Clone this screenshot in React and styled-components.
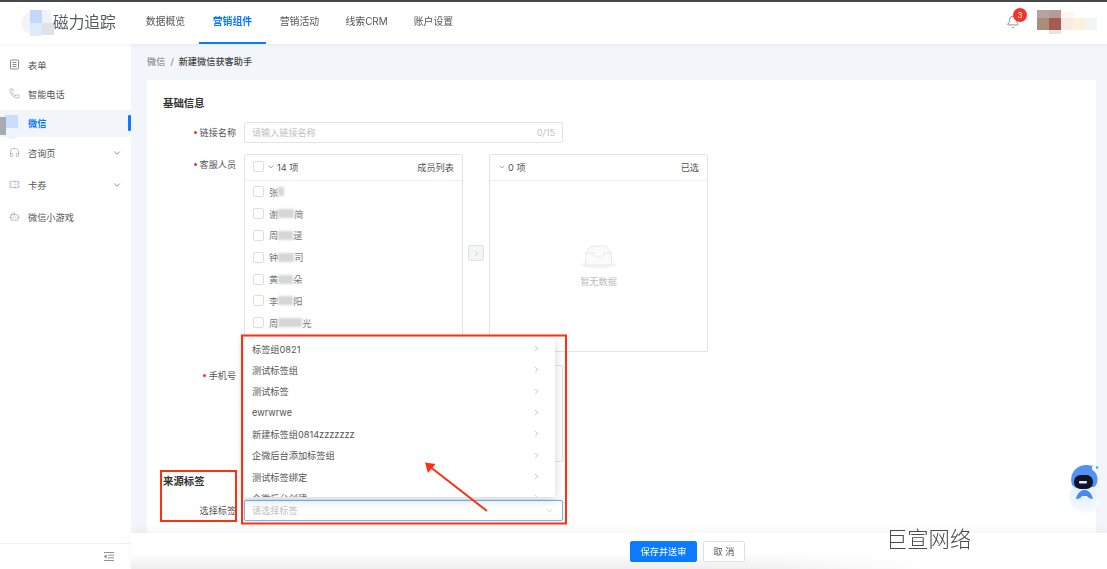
import React from 'react';
import styled, { createGlobalStyle } from 'styled-components';
import { Bell, Bot, ChevronDown, ChevronRight, Headphones, Phone, Ticket } from 'lucide-react';

const Global = createGlobalStyle`
  html, body { margin: 0; padding: 0; background: #fff; }
  * { box-sizing: border-box; }
  body { font-family: Inter, "Noto Sans CJK SC", "Noto Sans", sans-serif; color: #555; font-size: 9.2px; }
`;

const Page = styled.div`position: relative; width: 1107px; height: 569px; overflow: hidden;`;
const Shell = styled.div`position: relative; width: 100%; height: 100%; display: flex; flex-direction: column; filter: blur(0.42px);`;
const TopStrip = styled.div`height: 2px; background: #45484d; flex: none;`;
const Header = styled.header`
  height: 42px; flex: none; display: flex; align-items: stretch; background: #fff; position: relative; z-index: 2;
  box-shadow: 0 1px 4px rgba(0,0,0,.05);
`;
const Brand = styled.div`width: 132px; flex: none; display: flex; align-items: center; padding-left: 21px; position: relative;`;
const BrandName = styled.span`font-size: 15.7px; color: #565b62; position: absolute; left: 53px; top: 10px; line-height: 22px;`;
const Nav = styled.nav`display: flex; flex: 1;`;
const NavItem = styled.a`
  width: 67px; display: flex; align-items: center; justify-content: center; font-size: 9.9px; white-space: nowrap;
  color: ${p => (p.$active ? '#0a7aff' : '#555')}; font-weight: ${p => (p.$active ? 700 : 400)};
  border-bottom: 2px solid ${p => (p.$active ? '#0a7aff' : 'transparent')};
  padding-bottom: 3px;
`;
const HeaderRight = styled.div`width: 110px; margin-right: 9px; margin-left: -1px; display: flex; align-items: center; justify-content: space-between; padding-left: 18px;`;
const BellWrap = styled.div`position: relative; width: 14px; height: 14px; margin-top: -2px; color: #666; display: flex;`;
const Badge = styled.span`
  position: absolute; left: 7px; top: -7px; width: 14px; height: 14px; border-radius: 50%;
  background: #f5332a; color: #fff; font-size: 8px; line-height: 14px; text-align: center;
`;
const Avatar = styled.svg`display: block; width: 62px; height: 26px; margin-top: -2px;`;

const Body = styled.div`flex: 1; display: flex; min-height: 0;`;
const Sidebar = styled.aside`width: 131px; flex: none; background: #fff; display: flex; flex-direction: column; padding-top: 8px; position: relative;`;
const SideList = styled.div`flex: 1; display: flex; flex-direction: column; gap: 2px;`;
const SideItem = styled.div`
  position: relative; height: ${p => (p.$tall ? 30 : 27)}px; display: flex; align-items: center; gap: 8px; padding: 0 10px ${p => (p.$tall ? 3 : 2)}px 9px;
  flex: none; font-size: 9.2px;
  color: ${p => (p.$active ? '#0a7aff' : '#555')}; font-weight: ${p => (p.$active ? 700 : 400)};
  background: ${p => (p.$active ? '#f2f6fb' : 'transparent')};
  ${p => p.$active && `&::after { content: ""; position: absolute; right: 0; top: 5px; width: 3px; height: 16px; background: #0a7aff; border-radius: 1px; }`}
  svg { color: #808080; flex: none; }
`;
const SideLabel = styled.span`flex: 1;`;
const Caret = styled(ChevronDown)`&& { color: #555; margin-right: -1px; }`;
const SideMosaic = styled.svg`position: absolute; left: 0; top: 5px; width: 24px; height: 24px;`;
const SideFoot = styled.div`height: 26px; flex: none; border-top: 1px solid #f0f0f0; display: flex; align-items: center; justify-content: flex-end; padding: 0 17px 0 0;`;

const Main = styled.main`flex: 1; min-width: 0; display: flex; flex-direction: column; background: #f2f5f9;`;
const Content = styled.div`flex: 1; min-height: 0; overflow: hidden; padding: 0 11px 0 16px;`;
const Crumbs = styled.div`height: 36px; padding-bottom: 2px; display: flex; align-items: center; gap: 5px; color: #777; font-size: 9.2px;`;
const CrumbNow = styled.span`color: #444; font-weight: 500;`;
const Card = styled.section`background: #fff; padding: 16px 16px 40px; min-height: 500px;`;
const Title = styled.h3`margin: 0 0 12px; padding-top: 1px; height: 14px; font-size: 10.4px; line-height: 14px; font-weight: 700; color: #333;`;
const Row = styled.div`display: grid; grid-template-columns: 73px 1fr; column-gap: 8px; margin-bottom: ${p => p.$mb ?? 11}px;`;
const Label = styled.label`
  display: flex; justify-content: flex-end; align-items: center; gap: 3px; height: 21px; padding-bottom: 1px; color: #555; font-size: 9.1px; white-space: nowrap;
  ${p => p.$req && `&::before { content: ""; width: 3px; height: 3px; border-radius: 50%; background: #f5332a; }`}
`;
const Field = styled.div`
  position: relative; width: 319px; height: 21px; border: 1px solid ${p => (p.$focus ? '#78b4f8' : '#e3e3e3')}; border-radius: 2px;
  display: flex; align-items: center; justify-content: space-between; padding: 0 7px 1px; background: #fff; color: #c0c0c0; font-size: 9.1px;
  ${p => p.$focus && 'box-shadow: 0 0 0 1px rgba(10,122,255,.12);'}
`;
const Count = styled.span`color: #c4c4c4;`;
const TextBox = styled.div`width: 319px; height: 97px; border: 1px solid #e3e3e3; border-radius: 2px; background: #fff;`;
const Transfer = styled.div`display: flex; align-items: center; width: 464px;`;
const Panel = styled.div`width: 219px; height: 198px; border: 1px solid #e3e3e3; border-radius: 2px; display: flex; flex-direction: column; overflow: hidden; flex: none;`;
const PanelHead = styled.div`
  height: 26px; flex: none; display: flex; align-items: center; padding: 0 8px 2px; gap: 2px; border-bottom: 1px solid #f0f0f0; color: #555;
  svg { color: #444; flex: none; }
`;
const HeadTitle = styled.span`margin-left: auto;`;
const Check = styled.span`width: 11px; height: 11px; flex: none; border: 1px solid #dedede; border-radius: 2px; background: #fff; margin-right: ${p => p.$mr ?? 5}px;`;
const PersonRow = styled.div`height: 21.8px; flex: none; display: flex; align-items: center; padding-left: 8px; color: #777;`;
const Name = styled.span`display: inline-flex; align-items: center; white-space: nowrap;`;
const Smudge = styled.i`display: inline-block; height: 9px; background: #d6d6d6; filter: blur(1px); width: ${p => p.$w}px;`;
const Mover = styled.button`
  width: 16px; height: 16px; margin: 0 5px; padding: 0; flex: none; border: 1px solid #e0e0e0; border-radius: 2px; background: #f3f5f8; color: #aaa;
  display: flex; align-items: center; justify-content: center;
`;
const Empty = styled.div`flex: 1; display: flex; flex-direction: column; align-items: center; padding-top: 64px; color: #bdbdbd; gap: 5px;`;
const SelectArea = styled.div`position: relative; width: 319px;`;
const Dropdown = styled.div`
  position: absolute; left: 0; bottom: calc(100% + 3px); width: 311px; height: 160px; overflow: hidden; background: #fff; padding-top: 1px; z-index: 3;
  box-shadow: 0 3px 10px rgba(0,0,0,.16);
`;
const Option = styled.div`
  height: 21.33px; display: flex; align-items: center; justify-content: space-between; padding: 0 14px 0 8px; color: #555; font-size: 9.2px;
  svg { color: #888; }
`;
const Next = styled.div`margin: 11px 0 0; font-size: 10.4px; font-weight: 400; color: #777; line-height: 14px;`;
const Footer = styled.footer`
  height: 36px; flex: none; display: flex; align-items: center; padding-left: 499px; position: relative;
  background: linear-gradient(to right, rgba(255,255,255,0) 62%, #fff 82%), linear-gradient(#fff 55%, #eeeeee);
  box-shadow: 0 -3px 8px rgba(0,0,0,.04);
`;
const Btn = styled.button`
  height: 21px; width: ${p => p.$w}px; border-radius: 2px; font: inherit; font-size: 9.2px; padding: 0;
  border: 1px solid ${p => (p.$primary ? '#0a7aff' : '#e0e0e0')};
  background: ${p => (p.$primary ? '#0a7aff' : '#fff')}; color: ${p => (p.$primary ? '#fff' : '#555')};
`;
const FooterBtns = styled.div`display: flex; gap: 6px;`;

const Annotations = styled.svg`position: absolute; inset: 0; width: 1107px; height: 569px; pointer-events: none; z-index: 5;`;
const Robot = styled.svg`position: absolute; left: 1066px; top: 463px; width: 38px; height: 52px; z-index: 4;`;
const Watermark = styled.div`position: absolute; left: 886px; top: 522px; font-family: "Noto Sans CJK SC", sans-serif; font-size: 21.3px; line-height: 31px; color: #4a4a4a; font-weight: 300; z-index: 6;`;

const people = [
  ['张', 6, ''], ['谢', 16, '简'], ['周', 15, '逯'], ['钟', 16, '司'],
  ['黄', 15, '朵'], ['李', 15, '阳'], ['周', 24, '光'],
];
const options = ['标签组0821', '测试标签组', '测试标签', 'ewrwrwe', '新建标签组0814zzzzzzz', '企微后台添加标签组', '测试标签绑定', '企微后台创建'];
const navs = ['数据概览', '营销组件', '营销活动', '线索CRM', '账户设置'];

const FormIcon = () => (
  <svg width="11" height="11" viewBox="0 0 11 11" fill="none" stroke="currentColor" strokeWidth="0.9">
    <rect x="1.500" y="1" width="8" height="9" rx="0.8" />
    <path d="M3.500 3.500h4M3.500 5.500h4M3.500 7.500h4" />
  </svg>
);

export default function App() {
  return (
    <Page>
      <Global />
      <Shell>
        <TopStrip />
        <Header>
          <Brand>
            <svg width="34" height="28" viewBox="0 0 34 28" style={{ marginTop: 1 }}>
              <ellipse cx="16" cy="13" rx="16" ry="12" fill="#f1f4f9" />
              <rect x="9" y="0" width="12" height="13" fill="#c5d6fb" />
              <rect x="9" y="13" width="12" height="13" fill="#dfe9fc" />
              <rect x="21" y="0" width="9" height="13" fill="#eef3fb" />
              <rect x="21" y="13" width="12" height="12" fill="#dfe3e6" />
            </svg>
            <BrandName>磁力追踪</BrandName>
          </Brand>
          <Nav>
            {navs.map((n, i) => <NavItem key={n} $active={i === 1}>{n}</NavItem>)}
          </Nav>
          <HeaderRight>
            <BellWrap>
              <Bell size={14} strokeWidth={1.2} />
              <Badge>3</Badge>
            </BellWrap>
            <Avatar viewBox="0 0 62 26">
              <path d="M1 0h59v26H1z" fill="#fff" />
              <rect x="1" y="1" width="12" height="8" fill="#b8a29e" />
              <rect x="13" y="1" width="12" height="8" fill="#b49d97" />
              <rect x="1" y="9" width="12" height="12" fill="#a88c7d" />
              <rect x="13" y="9" width="12" height="12" fill="#a95a4e" />
              <rect x="13" y="21" width="12" height="4" fill="#eee2e0" />
              <rect x="25" y="3" width="12" height="6" fill="#fdf5f2" />
              <rect x="25" y="9" width="12" height="12" fill="#fbe9e3" />
              <rect x="37" y="9" width="12" height="12" fill="#fbf2dc" />
              <rect x="49" y="9" width="12" height="12" fill="#f2f5f4" />
            </Avatar>
          </HeaderRight>
        </Header>
        <Body>
          <Sidebar>
            <SideList>
              <SideItem><FormIcon /><SideLabel>表单</SideLabel></SideItem>
              <SideItem><Phone size={11} strokeWidth={1.1} /><SideLabel>智能电话</SideLabel></SideItem>
              <SideItem $active>
                <SideMosaic viewBox="0 0 24 24">
                  <ellipse cx="12" cy="12" rx="11" ry="12" fill="#eef4fc" />
                  <rect x="5" y="0" width="13" height="13" fill="#c9def9" />
                  <path d="M0 2h6v18H0z" fill="#a8acb2" />
                </SideMosaic>
                <span style={{ width: 11 }} />
                <SideLabel>微信</SideLabel>
              </SideItem>
              <SideItem $tall><Headphones size={11} strokeWidth={1.1} /><SideLabel>咨询页</SideLabel><Caret size={10} strokeWidth={1.5} /></SideItem>
              <SideItem $tall><Ticket size={11} strokeWidth={1.1} /><SideLabel>卡券</SideLabel><Caret size={10} strokeWidth={1.5} /></SideItem>
              <SideItem $tall><Bot size={11} strokeWidth={1.1} /><SideLabel>微信小游戏</SideLabel></SideItem>
            </SideList>
            <SideFoot>
              <svg width="10" height="9" viewBox="0 0 10 9" fill="none" stroke="#777" strokeWidth="0.8">
                <path d="M0 .5h10M4 3.200h6M4 5.800h6M0 8.500h10" />
                <path d="M2.500 2.600v3.800L0 4.500z" fill="#777" stroke="none" />
              </svg>
            </SideFoot>
          </Sidebar>
          <Main>
            <Content>
              <Crumbs>微信<span>/</span><CrumbNow>新建微信获客助手</CrumbNow></Crumbs>
              <Card>
                <Title>基础信息</Title>
                <Row>
                  <Label $req>链接名称</Label>
                  <Field>请输入链接名称<Count>0/15</Count></Field>
                </Row>
                <Row $mb={13}>
                  <Label $req>客服人员</Label>
                  <Transfer>
                    <Panel>
                      <PanelHead>
                        <Check $mr={1} />
                        <ChevronDown size={8} strokeWidth={1.4} />
                        <span>14 项</span>
                        <HeadTitle>成员列表</HeadTitle>
                      </PanelHead>
                      {people.map(([a, w, b], i) => (
                        <PersonRow key={i}>
                          <Check />
                          <Name>{a}<Smudge $w={w} />{b}</Name>
                        </PersonRow>
                      ))}
                    </Panel>
                    <Mover><ChevronRight size={9} strokeWidth={1.3} /></Mover>
                    <Panel>
                      <PanelHead>
                        <ChevronDown size={8} strokeWidth={1.4} />
                        <span>0 项</span>
                        <HeadTitle>已选</HeadTitle>
                      </PanelHead>
                      <Empty>
                        <svg width="37" height="24" viewBox="0 0 37 24">
                          <ellipse cx="18.500" cy="20" rx="18" ry="3.600" fill="#f5f5f5" />
                          <path d="M5.500 8 11 1h15l5.500 7v12h-26z" fill="#fafafa" stroke="#e4e4e4" strokeWidth="0.8" />
                          <path d="M5.500 8h8c0 2 1 3 2 3h6c1 0 2-1 2-3h8" fill="#fff" stroke="#e4e4e4" strokeWidth="0.8" />
                        </svg>
                        <span>暂无数据</span>
                      </Empty>
                    </Panel>
                  </Transfer>
                </Row>
                <Row $mb={12}>
                  <Label $req>手机号</Label>
                  <TextBox />
                </Row>
                <Title>来源标签</Title>
                <Row $mb={0}>
                  <Label>选择标签</Label>
                  <SelectArea>
                    <Dropdown>
                      {options.map(o => (
                        <Option key={o}>{o}<ChevronRight size={9} strokeWidth={1.3} /></Option>
                      ))}
                    </Dropdown>
                    <Field $focus>请选择标签<ChevronDown size={11} strokeWidth={1} color="#aaa" /></Field>
                  </SelectArea>
                </Row>
                <Next>推广</Next>
              </Card>
            </Content>
            <Footer>
              <FooterBtns>
                <Btn $primary $w={67}>保存并送审</Btn>
                <Btn $w={42}>取 消</Btn>
              </FooterBtns>
            </Footer>
          </Main>
        </Body>
        <Robot viewBox="0 0 38 52">
          <defs>
            <radialGradient id="glow" cx="0.45" cy="0.3" r="0.75">
              <stop offset="0" stopColor="#dcebff" />
              <stop offset="1" stopColor="#fafcff" />
            </radialGradient>
          </defs>
          <circle cx="19" cy="34" r="16" fill="url(#glow)" />
          <path d="M6 22C3 13 8 3 19 2c3 0 5 0 8 1-2 2-1 4 2 6 4 5 3 13-1 15l-18 1z" fill="#5590f8" />
          <circle cx="31" cy="4.500" r="1.300" fill="#5c97f8" />
          <rect x="8" y="12" width="19" height="14" rx="6.500" fill="#0e1626" />
          <rect x="13" y="18" width="8" height="2.500" rx="1" fill="#dfe9ff" />
          <path d="M10 36c1-5 4-8 7-9h3c3 1 6 4 7 9-3-1-5-1-6-3h-5c-1 2-3 3-6 3z" fill="#4a86f5" />
        </Robot>
        <Annotations viewBox="0 0 1107 569">
          <g fill="none" stroke="#ff3010" strokeWidth="2">
            <rect x="242" y="335.500" width="324" height="188" />
            <rect x="161" y="471" width="75" height="50" />
            <path d="M487 511 429 466" />
          </g>
          <path d="M425 462.500 435.500 464 428 473z" fill="#ff3010" />
        </Annotations>
      </Shell>
      <Watermark>巨宣网络</Watermark>
    </Page>
  );
}
